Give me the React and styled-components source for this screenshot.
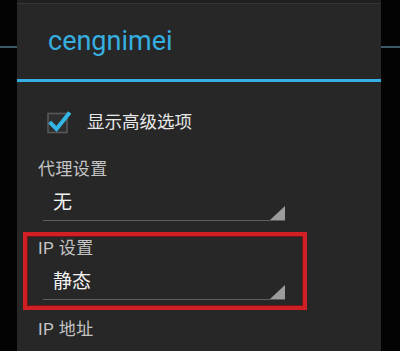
import React from "react";
import styled, { createGlobalStyle } from "styled-components";

const Global = createGlobalStyle`
  html, body { margin: 0; padding: 0; background: #000; }
  body { width: 400px; height: 351px; overflow: hidden; }
`;

const Screen = styled.div`
  width: 400px;
  height: 351px;
  background:
    linear-gradient(to bottom, transparent 46px, #3b5966 46px, #3b5966 48px, transparent 48px),
    #030303;
`;

const Dialog = styled.div`
  margin-left: 17px;
  width: 364px;
  height: 351px;
  box-sizing: border-box;
  background: #272727;
  border-top: 3px solid #202020;
  box-shadow: inset 0 1px 0 #353535;
  font-family: "Roboto", "Noto Sans CJK SC", sans-serif;
`;

const Title = styled.div`
  height: 76px;
  box-sizing: border-box;
  padding: 22px 0 0 31px;
  font-size: 27px;
  line-height: 32px;
  color: #35aee0;
`;

const Divider = styled.div`
  height: 3px;
  background: #35b0e2;
`;

const Body = styled.div`
  padding-top: 29px;
`;

const CheckRow = styled.div`
  display: flex;
  align-items: center;
  height: 22px;
  padding-left: 29px;
  gap: 15px;
`;

const CheckText = styled.span`
  font-size: 17.5px;
  line-height: 22px;
  color: #e8e8e8;
`;

const Label = styled.div`
  padding-left: ${(p) => p.$indent}px;
  margin-top: ${(p) => p.$top}px;
  font-size: 17px;
  line-height: 22px;
  color: #c4c4c4;
  letter-spacing: 0.4px;
`;

const Spinner = styled.div`
  display: flex;
  justify-content: space-between;
  align-items: flex-end;
  margin-left: ${(p) => p.$indent}px;
  margin-top: ${(p) => p.$top}px;
  width: 242px;
  box-sizing: border-box;
  padding-left: 10px;
  border-bottom: 1px solid #5e5e5e;
`;

const Value = styled.span`
  font-size: 19px;
  line-height: 24px;
  padding-bottom: 5px;
  color: #f4f4f4;
`;

const Highlight = styled.div`
  margin: 11px 0 0 6px;
  width: 284px;
  box-sizing: border-box;
  border: 4px solid #d11f26;
  box-shadow: inset 0 0 0 1px #6e1515;
  padding: 1px 0 6px 0;
`;

const Checkbox = () => (
  <svg width="26" height="26" viewBox="0 0 26 26">
    <rect x="2" y="4.5" width="19" height="19" fill="#2e2e2e" stroke="#575757" strokeWidth="1.6" />
    <path d="M5 14.5 L10.5 20 L22.5 5" fill="none" stroke="#33b5e5" strokeWidth="4" strokeLinecap="square" />
  </svg>
);

const Corner = () => (
  <svg width="15" height="14" viewBox="0 0 15 14">
    <polygon points="15,0 15,14 0,14" fill="#9c9c9c" />
  </svg>
);

export default function App() {
  return (
    <>
      <Global />
      <Screen>
        <Dialog>
          <Title>cengnimei</Title>
          <Divider />
          <Body>
            <CheckRow>
              <Checkbox />
              <CheckText>显示高级选项</CheckText>
            </CheckRow>
            <Label $indent={21} $top={25}>代理设置</Label>
            <Spinner $indent={26} $top={11}>
              <Value>无</Value>
              <Corner />
            </Spinner>
            <Highlight>
              <Label $indent={11} $top={0}>IP 设置</Label>
              <Spinner $indent={16} $top={11}>
                <Value>静态</Value>
                <Corner />
              </Spinner>
            </Highlight>
            <Label $indent={21} $top={8}>IP 地址</Label>
          </Body>
        </Dialog>
      </Screen>
    </>
  );
}
